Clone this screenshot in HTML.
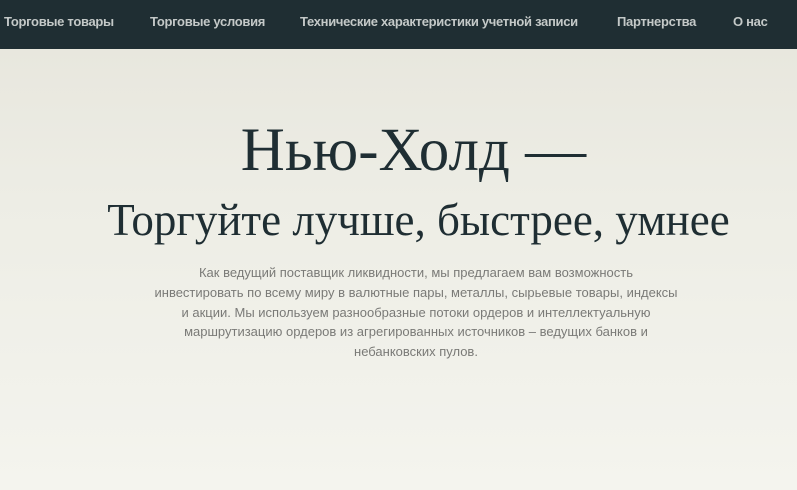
<!DOCTYPE html>
<html><head><meta charset="utf-8"><style>
*{margin:0;padding:0;box-sizing:border-box}
html,body{width:797px;height:490px;overflow:hidden}
body{background:linear-gradient(#e8e7de 49px,#edede5 200px,#f4f4ee 490px);font-family:"Liberation Sans","Noto Sans CJK SC",sans-serif;position:relative}
nav{position:absolute;left:0;top:0;width:797px;height:49px;background:#1f2e33}
nav span{position:absolute;top:14px;font-size:13px;font-weight:bold;color:#c4c9c8;white-space:nowrap;letter-spacing:-0.3px}
h1,h2{position:absolute;left:0;width:797px;text-align:center;font-family:"Liberation Serif",serif;font-weight:normal;color:#1f2e33;white-space:nowrap}
h1{top:116px;font-size:61px;line-height:70px;left:15px}
h2{top:193px;font-size:45px;line-height:54px;left:20px}
p{position:absolute;top:263px;left:0;width:832px;text-align:center;font-size:13px;line-height:19.8px;color:#7a7a77;white-space:nowrap;letter-spacing:0}
</style></head><body>
<nav>
<span style="left:4px">Торговые товары</span>
<span style="left:150px">Торговые условия</span>
<span style="left:300px">Технические характеристики учетной записи</span>
<span style="left:617px">Партнерства</span>
<span style="left:733px">О нас</span>
</nav>
<h1>Нью-Холд —</h1>
<h2>Торгуйте лучше, быстрее, умнее</h2>
<p>Как ведущий поставщик ликвидности, мы предлагаем вам возможность<br>инвестировать по всему миру в валютные пары, металлы, сырьевые товары, индексы<br>и акции. Мы используем разнообразные потоки ордеров и интеллектуальную<br>маршрутизацию ордеров из агрегированных источников – ведущих банков и<br>небанковских пулов.</p>
</body></html>
